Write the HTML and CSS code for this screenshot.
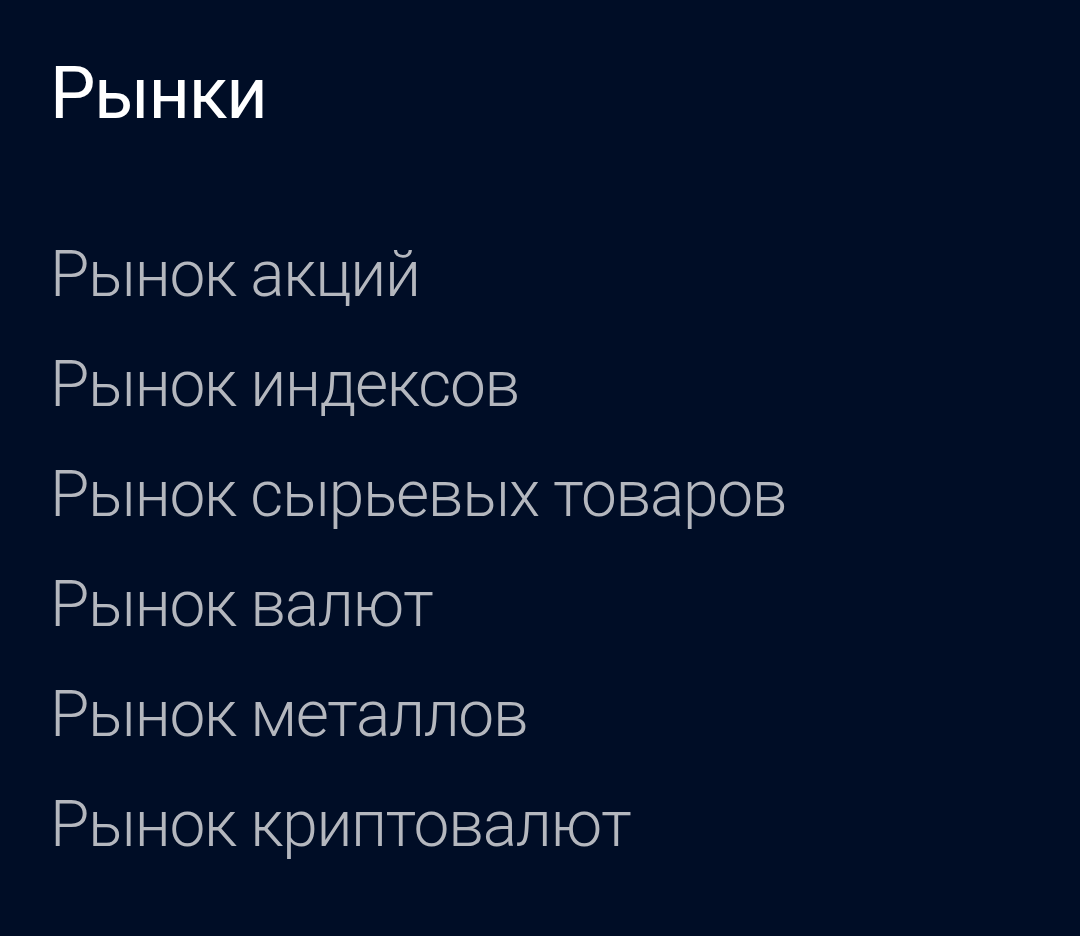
FILE: index.html
```html
<!DOCTYPE html>
<html lang="ru">
<head>
<meta charset="utf-8">
<link rel="stylesheet" href="styles.css">
</head>
<body>
<main class="panel">
  <h1 class="title">Рынки</h1>
  <ul class="list">
    <li class="item">Рынок акций</li>
    <li class="item">Рынок индексов</li>
    <li class="item">Рынок сырьевых товаров</li>
    <li class="item">Рынок валют</li>
    <li class="item">Рынок металлов</li>
    <li class="item">Рынок криптовалют</li>
  </ul>
</main>
</body>
</html>
```
FILE: styles.css
```css
html, body {
  margin: 0;
  padding: 0;
  background: #000d26;
  height: 100%;
}
.panel {
  padding: 44px 50px;
  font-family: Roboto, "Liberation Sans", sans-serif;
}
.title {
  margin: 0;
  font-size: 72px;
  font-weight: 400;
  letter-spacing: -1.4px;
  color: #ffffff;
  line-height: 100px;
}
.list {
  list-style: none;
  margin: 0;
  padding: 76px 0 0;
}
.item {
  font-size: 64px;
  font-weight: 300;
  letter-spacing: -1.3px;
  color: #b4b7be;
  line-height: 110px;
}
```
